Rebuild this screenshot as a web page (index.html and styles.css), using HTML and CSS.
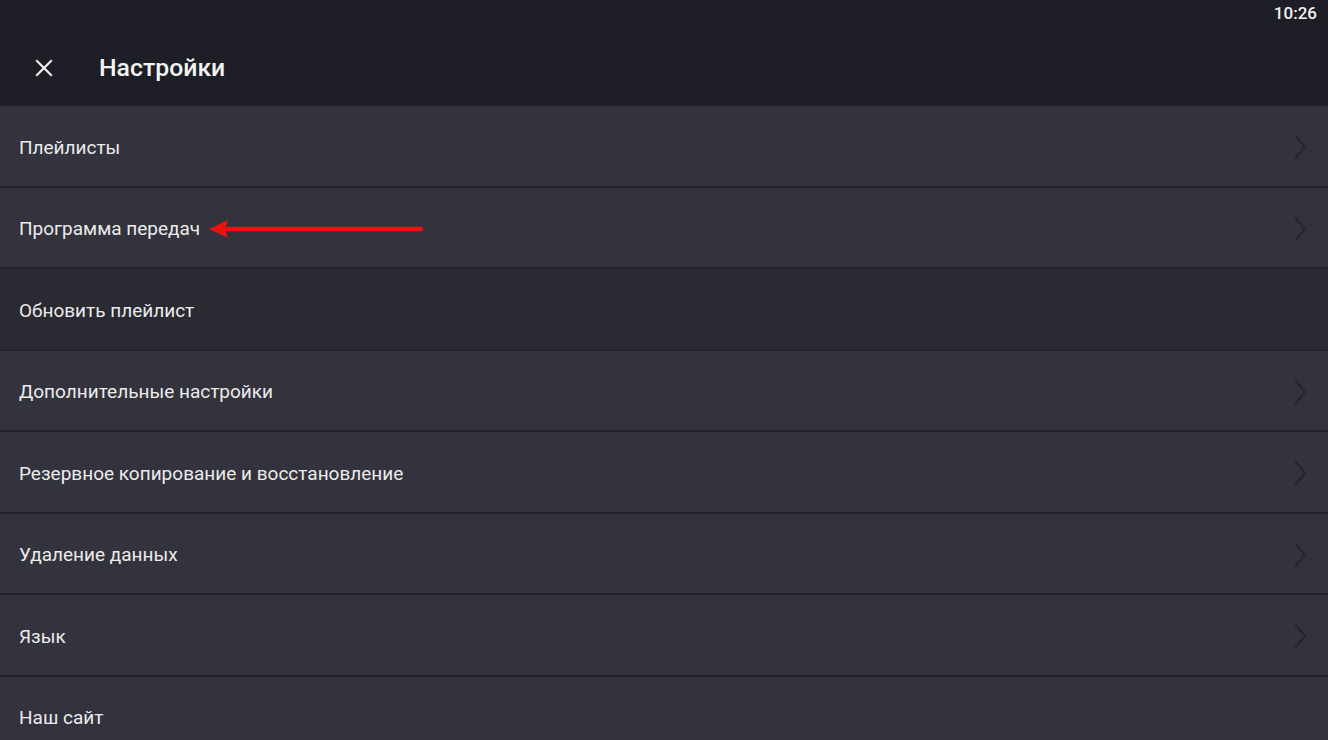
FILE: index.html
```html
<!DOCTYPE html>
<html lang="ru">
<head>
<meta charset="utf-8">
<title>Настройки</title>
<link rel="stylesheet" href="styles.css">
</head>
<body>
<div class="app">
  <header class="topbar">
    <div class="status"><span class="time">10:26</span></div>
    <div class="toolbar">
      <svg class="close" viewBox="0 0 24 24" width="24" height="24"><path d="M5 5 L19 19 M19 5 L5 19" stroke="#f0f0f0" stroke-width="2.2" fill="none" stroke-linecap="square"/></svg>
      <h1 class="title">Настройки</h1>
    </div>
  </header>
  <ul class="list">
    <li class="row"><span class="label">Плейлисты</span><svg class="chev" viewBox="0 0 14 28" width="14" height="28"><path d="M2 2 L12 14 L2 26" stroke="#25252d" stroke-width="2" fill="none"/></svg></li>
    <li class="row"><span class="label">Программа передач</span>
      <svg class="arrow" viewBox="0 0 220 22" width="220" height="22"><path d="M10 11 H212" stroke="#ee1111" stroke-width="4.5" stroke-linecap="round"/><path d="M0 11 L19 2 L16 11 L19 20 Z" fill="#ee1111"/></svg>
      <svg class="chev" viewBox="0 0 14 28" width="14" height="28"><path d="M2 2 L12 14 L2 26" stroke="#25252d" stroke-width="2" fill="none"/></svg></li>
    <li class="row dark"><span class="label">Обновить плейлист</span></li>
    <li class="row"><span class="label">Дополнительные настройки</span><svg class="chev" viewBox="0 0 14 28" width="14" height="28"><path d="M2 2 L12 14 L2 26" stroke="#25252d" stroke-width="2" fill="none"/></svg></li>
    <li class="row"><span class="label">Резервное копирование и восстановление</span><svg class="chev" viewBox="0 0 14 28" width="14" height="28"><path d="M2 2 L12 14 L2 26" stroke="#25252d" stroke-width="2" fill="none"/></svg></li>
    <li class="row"><span class="label">Удаление данных</span><svg class="chev" viewBox="0 0 14 28" width="14" height="28"><path d="M2 2 L12 14 L2 26" stroke="#25252d" stroke-width="2" fill="none"/></svg></li>
    <li class="row"><span class="label">Язык</span><svg class="chev" viewBox="0 0 14 28" width="14" height="28"><path d="M2 2 L12 14 L2 26" stroke="#25252d" stroke-width="2" fill="none"/></svg></li>
    <li class="row"><span class="label">Наш сайт</span></li>
  </ul>
</div>
</body>
</html>
```
FILE: styles.css
```css
* { box-sizing: border-box; }
html, body { margin: 0; padding: 0; }
body {
  width: 1328px;
  height: 740px;
  overflow: hidden;
  background: #33333d;
  font-family: Roboto, "Noto Sans", "Liberation Sans", sans-serif;
  color: #ececec;
}
.app { display: flex; flex-direction: column; height: 740px; }
.topbar {
  background: #1e1e26;
  height: 106px;
  display: flex;
  flex-direction: column;
}
.status {
  height: 26px;
  display: flex;
  justify-content: flex-end;
  align-items: center;
  padding: 0 11px 0 0;
}
.time {
  font-size: 17px;
  font-weight: 500;
  color: #f2f2f2;
}
.toolbar {
  display: flex;
  align-items: center;
  height: 80px;
  padding: 3px 0 0 32px;
}
.close { width: 24px; height: 24px; margin-right: 43px; }
.title {
  margin: 0;
  font-size: 24.8px;
  font-weight: 500;
  color: #f4f4f4;
}
.list { list-style: none; margin: 0; padding: 0; }
.row {
  position: relative;
  height: 81.5px;
  border-bottom: 2px solid #23232b;
  background: #33333d;
  display: flex;
  align-items: center;
  padding: 3px 0 0 19px;
}
.row.dark { background: #2a2a32; }
.label {
  font-size: 19px;
  color: #ebebeb;
}
.chev {
  margin-left: auto;
  margin-right: 21px;
}
.arrow {
  position: absolute;
  left: 209px;
  top: 50%;
  margin-top: -9px;
}
```
